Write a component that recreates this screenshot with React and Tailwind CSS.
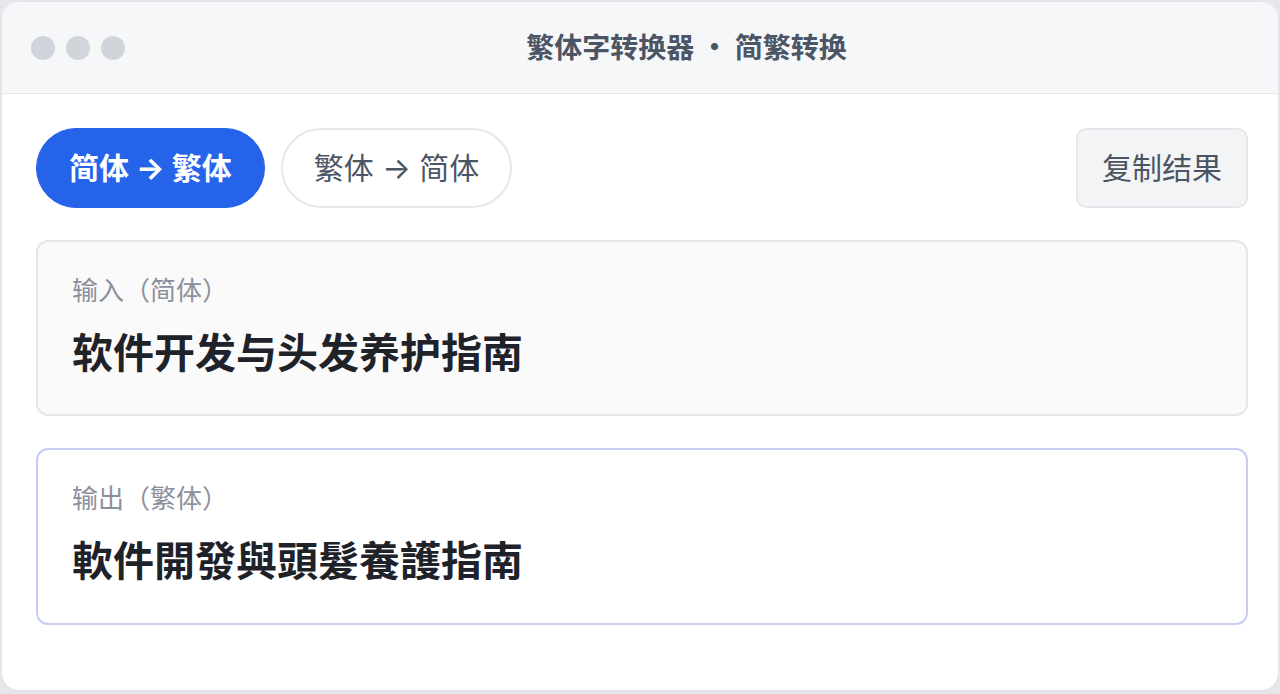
import { useState } from "react";

const FONT = { fontFamily: '"Inter", "Noto Sans CJK SC", "Noto Sans", sans-serif' };

const pill = {
    on: "h-20 px-8 rounded-full bg-[#2563eb] text-white text-[30px] font-bold border border-[#2563eb]",
    off: "h-20 px-[31px] rounded-full bg-white text-[#4b5563] text-[30px] border-2 border-[#e5e7eb]",
};

export default function App() {
    const [mode, setMode] = useState("s2t");

    return (
        <div className="h-[694px] w-[1280px] bg-[#e5e7eb] p-px" style={FONT}>
            <div className="h-[690px] rounded-[18px] bg-white overflow-hidden flex flex-col border border-[#e1e3e8]">
                {/* title bar */}
                <div className="h-[92px] shrink-0 bg-[#f6f7f9] border-b border-[#e5e7eb] flex items-center pl-[29px] pr-[30px]">
                    <div className="flex gap-[11px]">
                        <span className="w-6 h-6 rounded-full bg-[#d1d5db]" />
                        <span className="w-6 h-6 rounded-full bg-[#d1d5db]" />
                        <span className="w-6 h-6 rounded-full bg-[#d1d5db]" />
                    </div>
                    <div
                        className="flex-1 text-center text-[28px] font-bold text-[#4b5563] leading-none pb-1"
                        style={{ fontFamily: '"Noto Sans CJK SC", sans-serif' }}
                    >
                        繁体字转换器 · 简繁转换
                    </div>
                </div>

                {/* body */}
                <div className="pl-[34px] pr-[30px] pt-[34px] flex flex-col">
                    <div className="flex items-center">
                        <button onClick={() => setMode("s2t")} className={mode === "s2t" ? pill.on : pill.off}>
                            简体 → 繁体
                        </button>
                        <div className="w-4" />
                        <button onClick={() => setMode("t2s")} className={mode === "t2s" ? pill.on : pill.off}>
                            繁体 → 简体
                        </button>
                        <button className="ml-auto h-20 px-[24px] rounded-[10px] bg-[#f3f4f6] border-2 border-[#e5e7eb] text-[#4b5563] text-[30px]">
                            复制结果
                        </button>
                    </div>

                    {/* input */}
                    <div className="mt-8 h-[176px] rounded-xl bg-[#fafafa] border-2 border-[#e5e7eb] px-[34px] pt-[33px]">
                        <div className="text-[26px] leading-8 text-[#8b919c]">输入（简体）</div>
                        <div className="mt-[22px] text-[41px] leading-[48px] font-bold text-[#1f2229]">
                            软件开发与头发养护指南
                        </div>
                    </div>

                    {/* output */}
                    <div className="mt-8 h-[177px] rounded-xl bg-white border-2 border-[#c7cdf3] px-[34px] pt-[33px]">
                        <div className="text-[26px] leading-8 text-[#8b919c]">输出（繁体）</div>
                        <div className="mt-[22px] text-[41px] leading-[48px] font-bold text-[#1f2229]">
                            軟件開發與頭髮養護指南
                        </div>
                    </div>
                </div>
            </div>
        </div>
    );
}
